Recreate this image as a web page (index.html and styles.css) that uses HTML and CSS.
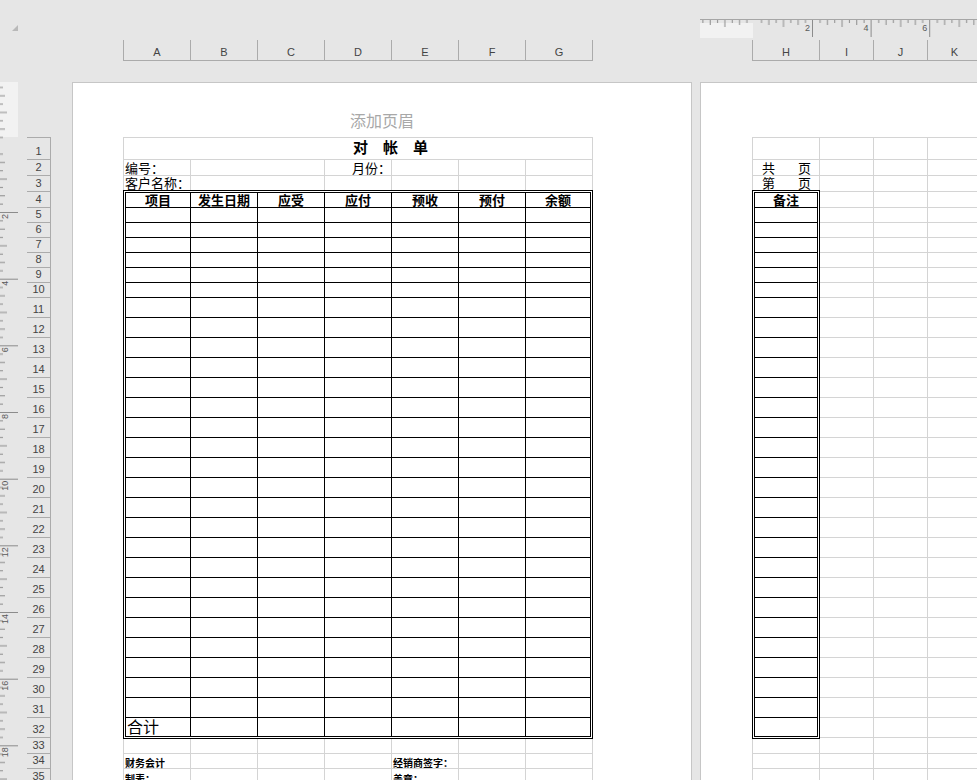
FILE: index.html
```html
<!DOCTYPE html>
<html lang="zh-CN">
<head>
<meta charset="utf-8">
<title>对帐单</title>
<link rel="stylesheet" href="styles.css">
</head>
<body>
<div class="app">
  <div class="top">
    <div class="top-left"><span class="corner"></span></div>
    <div class="top-p1">
      <div class="colheads p1"><span>A</span><span>B</span><span>C</span><span>D</span><span>E</span><span>F</span><span>G</span></div>
    </div>
    <div class="top-p2">
      <svg class="hruler" width="277" height="19" viewBox="0 0 277 19">
        <defs>
          <pattern id="hq" x="53.7" y="0" width="58.6" height="19" patternUnits="userSpaceOnUse">
            <rect x="7.33" y="1" width="1" height="3" fill="#8c8c8c"/>
            <rect x="14.65" y="1" width="1" height="5" fill="#8c8c8c"/>
            <rect x="21.98" y="1" width="1" height="3" fill="#8c8c8c"/>
            <rect x="29.3" y="1" width="1" height="7" fill="#8c8c8c"/>
            <rect x="36.63" y="1" width="1" height="3" fill="#8c8c8c"/>
            <rect x="43.95" y="1" width="1" height="5" fill="#8c8c8c"/>
            <rect x="51.28" y="1" width="1" height="3" fill="#8c8c8c"/>
          </pattern>
        </defs>
        <rect x="0" y="4" width="53" height="15" fill="#f2f2f2"/>
        <rect x="0" y="0" width="277" height="1" fill="#a6a6a6"/>
        <rect x="0" y="0" width="277" height="19" fill="url(#hq)"/>
        <rect x="112" y="1" width="1" height="17" fill="#8c8c8c"/>
        <rect x="170.6" y="1" width="1" height="17" fill="#8c8c8c"/>
        <rect x="229.2" y="1" width="1" height="17" fill="#8c8c8c"/>
        <text x="110" y="12" class="rl" text-anchor="end">2</text>
        <text x="168.6" y="12" class="rl" text-anchor="end">4</text>
        <text x="227.2" y="12" class="rl" text-anchor="end">6</text>
      </svg>
      <div class="colheads p2"><span class="wh">H</span><span>I</span><span>J</span><span>K</span></div>
    </div>
  </div>

  <div class="main">
    <svg class="vruler" width="18" height="698" viewBox="0 0 18 698">
      <defs>
        <pattern id="vq" x="0" y="63.3" width="18" height="66.67" patternUnits="userSpaceOnUse">
          <rect x="0" y="8.33" width="3" height="1" fill="#8c8c8c"/>
          <rect x="0" y="16.67" width="5" height="1" fill="#8c8c8c"/>
          <rect x="0" y="25" width="3" height="1" fill="#8c8c8c"/>
          <rect x="0" y="33.33" width="7" height="1" fill="#8c8c8c"/>
          <rect x="0" y="41.67" width="3" height="1" fill="#8c8c8c"/>
          <rect x="0" y="50" width="5" height="1" fill="#8c8c8c"/>
          <rect x="0" y="58.33" width="3" height="1" fill="#8c8c8c"/>
        </pattern>
      </defs>
      <rect x="0" y="0" width="18" height="55" fill="#f2f2f2"/>
      <rect x="0" y="0" width="18" height="698" fill="url(#vq)"/>
      <rect x="0" y="130" width="18" height="1" fill="#8c8c8c"/>
      <rect x="0" y="196.7" width="18" height="1" fill="#8c8c8c"/>
      <rect x="0" y="263.3" width="18" height="1" fill="#8c8c8c"/>
      <rect x="0" y="330" width="18" height="1" fill="#8c8c8c"/>
      <rect x="0" y="396.7" width="18" height="1" fill="#8c8c8c"/>
      <rect x="0" y="463.3" width="18" height="1" fill="#8c8c8c"/>
      <rect x="0" y="530" width="18" height="1" fill="#8c8c8c"/>
      <rect x="0" y="596.7" width="18" height="1" fill="#8c8c8c"/>
      <rect x="0" y="663.3" width="18" height="1" fill="#8c8c8c"/>
      <text class="rl" text-anchor="end" transform="translate(8 132) rotate(-90)">2</text>
      <text class="rl" text-anchor="end" transform="translate(8 198.7) rotate(-90)">4</text>
      <text class="rl" text-anchor="end" transform="translate(8 265.3) rotate(-90)">6</text>
      <text class="rl" text-anchor="end" transform="translate(8 332) rotate(-90)">8</text>
      <text class="rl" text-anchor="end" transform="translate(8 398.7) rotate(-90)">10</text>
      <text class="rl" text-anchor="end" transform="translate(8 465.3) rotate(-90)">12</text>
      <text class="rl" text-anchor="end" transform="translate(8 532) rotate(-90)">14</text>
      <text class="rl" text-anchor="end" transform="translate(8 598.7) rotate(-90)">16</text>
      <text class="rl" text-anchor="end" transform="translate(8 665.3) rotate(-90)">18</text>
    </svg>

    <div class="rowheads">
      <div class="rh r23 first">1</div>
      <div class="rh r16">2</div>
      <div class="rh r16">3</div>
      <div class="rh r16">4</div>
      <div class="rh r15">5</div>
      <div class="rh r15">6</div>
      <div class="rh r15">7</div>
      <div class="rh r15">8</div>
      <div class="rh r15">9</div>
      <div class="rh r15">10</div>
      <div class="rh r20">11</div>
      <div class="rh r20">12</div>
      <div class="rh r20">13</div>
      <div class="rh r20">14</div>
      <div class="rh r20">15</div>
      <div class="rh r20">16</div>
      <div class="rh r20">17</div>
      <div class="rh r20">18</div>
      <div class="rh r20">19</div>
      <div class="rh r20">20</div>
      <div class="rh r20">21</div>
      <div class="rh r20">22</div>
      <div class="rh r20">23</div>
      <div class="rh r20">24</div>
      <div class="rh r20">25</div>
      <div class="rh r20">26</div>
      <div class="rh r20">27</div>
      <div class="rh r20">28</div>
      <div class="rh r20">29</div>
      <div class="rh r20">30</div>
      <div class="rh r20">31</div>
      <div class="rh r20">32</div>
      <div class="rh r16">33</div>
      <div class="rh r15">34</div>
      <div class="rh r16">35</div>
    </div>

    <div class="page page1">
      <div class="hdr">添加页眉</div>
      <div class="sheet">
        <div class="row1"><span class="title">对帐单</span></div>
        <div class="grow h16">
          <div class="c lbl">编号：</div><div class="c span2"></div><div class="c lbl rt">月份：</div><div class="c"></div><div class="c"></div><div class="c"></div>
        </div>
        <div class="grow h14 nb">
          <div class="c lbl">客户名称：</div><div class="c span2"></div><div class="c"></div><div class="c"></div><div class="c"></div><div class="c"></div>
        </div>
        <div class="tbl">
          <div class="th">项目</div><div class="th">发生日期</div><div class="th">应受</div><div class="th">应付</div><div class="th">预收</div><div class="th">预付</div><div class="th">余额</div>
          <div></div><div></div><div></div><div></div><div></div><div></div><div></div>
          <div></div><div></div><div></div><div></div><div></div><div></div><div></div>
          <div></div><div></div><div></div><div></div><div></div><div></div><div></div>
          <div></div><div></div><div></div><div></div><div></div><div></div><div></div>
          <div></div><div></div><div></div><div></div><div></div><div></div><div></div>
          <div></div><div></div><div></div><div></div><div></div><div></div><div></div>
          <div></div><div></div><div></div><div></div><div></div><div></div><div></div>
          <div></div><div></div><div></div><div></div><div></div><div></div><div></div>
          <div></div><div></div><div></div><div></div><div></div><div></div><div></div>
          <div></div><div></div><div></div><div></div><div></div><div></div><div></div>
          <div></div><div></div><div></div><div></div><div></div><div></div><div></div>
          <div></div><div></div><div></div><div></div><div></div><div></div><div></div>
          <div></div><div></div><div></div><div></div><div></div><div></div><div></div>
          <div></div><div></div><div></div><div></div><div></div><div></div><div></div>
          <div></div><div></div><div></div><div></div><div></div><div></div><div></div>
          <div></div><div></div><div></div><div></div><div></div><div></div><div></div>
          <div></div><div></div><div></div><div></div><div></div><div></div><div></div>
          <div></div><div></div><div></div><div></div><div></div><div></div><div></div>
          <div></div><div></div><div></div><div></div><div></div><div></div><div></div>
          <div></div><div></div><div></div><div></div><div></div><div></div><div></div>
          <div></div><div></div><div></div><div></div><div></div><div></div><div></div>
          <div></div><div></div><div></div><div></div><div></div><div></div><div></div>
          <div></div><div></div><div></div><div></div><div></div><div></div><div></div>
          <div></div><div></div><div></div><div></div><div></div><div></div><div></div>
          <div></div><div></div><div></div><div></div><div></div><div></div><div></div>
          <div></div><div></div><div></div><div></div><div></div><div></div><div></div>
          <div></div><div></div><div></div><div></div><div></div><div></div><div></div>
          <div class="sum">合计</div><div></div><div></div><div></div><div></div><div></div><div></div>
        </div>
        <div class="grow h15">
          <div class="c"></div><div class="c"></div><div class="c"></div><div class="c"></div><div class="c"></div><div class="c"></div><div class="c"></div>
        </div>
        <div class="grow h15">
          <div class="c ft">财务会计</div><div class="c"></div><div class="c"></div><div class="c"></div><div class="c ft">经销商签字：</div><div class="c"></div><div class="c"></div>
        </div>
        <div class="grow h16">
          <div class="c ft ft2">制表：</div><div class="c"></div><div class="c"></div><div class="c"></div><div class="c ft ft2">盖章：</div><div class="c"></div><div class="c"></div>
        </div>
      </div>
    </div>

    <div class="page page2">
      <div class="hdr"></div>
      <div class="sheet2">
        <div class="hcol">
          <div class="hc h23 first"></div>
          <div class="hc h16 pg"><span>共</span><span>页</span></div>
          <div class="hc h14 pg nb"><span>第</span><span>页</span></div>
          <div class="tbl1">
            <div class="th">备注</div>
            <div></div><div></div><div></div><div></div><div></div><div></div>
            <div></div><div></div><div></div><div></div><div></div><div></div><div></div>
            <div></div><div></div><div></div><div></div><div></div><div></div><div></div>
            <div></div><div></div><div></div><div></div><div></div><div></div><div></div><div></div>
          </div>
          <div class="hc h15"></div>
          <div class="hc h15"></div>
          <div class="hc h16"></div>
        </div>
        <div class="ijk">
          <div></div><div></div><div></div>
          <div></div><div></div><div></div>
          <div></div><div></div><div></div>
          <div></div><div></div><div></div>
          <div></div><div></div><div></div>
          <div></div><div></div><div></div>
          <div></div><div></div><div></div>
          <div></div><div></div><div></div>
          <div></div><div></div><div></div>
          <div></div><div></div><div></div>
          <div></div><div></div><div></div>
          <div></div><div></div><div></div>
          <div></div><div></div><div></div>
          <div></div><div></div><div></div>
          <div></div><div></div><div></div>
          <div></div><div></div><div></div>
          <div></div><div></div><div></div>
          <div></div><div></div><div></div>
          <div></div><div></div><div></div>
          <div></div><div></div><div></div>
          <div></div><div></div><div></div>
          <div></div><div></div><div></div>
          <div></div><div></div><div></div>
          <div></div><div></div><div></div>
          <div></div><div></div><div></div>
          <div></div><div></div><div></div>
          <div></div><div></div><div></div>
          <div></div><div></div><div></div>
          <div></div><div></div><div></div>
          <div></div><div></div><div></div>
          <div></div><div></div><div></div>
          <div></div><div></div><div></div>
          <div></div><div></div><div></div>
          <div></div><div></div><div></div>
          <div></div><div></div><div></div>
        </div>
      </div>
    </div>
  </div>
</div>
</body>
</html>
```
FILE: styles.css
```css
* { box-sizing: border-box; }
html, body { margin: 0; padding: 0; }
body {
  width: 977px;
  height: 780px;
  overflow: hidden;
  background: #e6e6e6;
  font-family: "Liberation Sans", Arial, sans-serif;
}
.app { width: 977px; height: 780px; display: flex; flex-direction: column; overflow: hidden; }

/* ---------- top strip ---------- */
.top { height: 82px; flex: none; display: flex; }
.top-left { width: 72px; flex: none; padding: 25px 0 0 12px; }
.corner {
  display: block; width: 0; height: 0;
  border-left: 6px solid transparent;
  border-bottom: 6px solid #b9b9b9;
}
.top-p1 { width: 628px; flex: none; padding: 40px 0 0 51px; }
.top-p2 { flex: 1; padding-top: 19px; overflow: hidden; }
.hruler { display: block; }
.rl { font-family: "Liberation Sans", Arial, sans-serif; font-size: 9px; fill: #5a5a5a; }

.colheads { display: flex; height: 21px; border-bottom: 1px solid #ababab; }
.colheads span {
  flex: none;
  width: 67px;
  border-left: 1px solid #ababab;
  text-align: center;
  font-size: 11px;
  line-height: 14px;
  padding-top: 5px;
  color: #444;
}
.colheads.p1 { width: 470px; }
.colheads.p1 span:last-child { width: 68px; border-right: 1px solid #ababab; }
.colheads.p2 { margin: 2px 0 0 52px; width: 240px; }
.colheads.p2 span { width: 54px; }
.colheads.p2 span.wh { width: 67px; }

/* ---------- main area ---------- */
.main { height: 698px; flex: none; display: flex; overflow: hidden; }
.vruler { display: block; flex: none; }

.rowheads { width: 24px; flex: none; margin: 0 21px 0 9px; padding-top: 55px; }
.rh {
  border-right: 1px solid #ababab;
  border-bottom: 1px solid #ababab;
  display: flex; align-items: flex-end; justify-content: center;
  font-size: 11px; line-height: 12px; padding-bottom: 2px;
  color: #444;
}
.rh.first { border-top: 1px solid #ababab; }
.r23 { height: 23px; }
.r16 { height: 16px; }
.r15 { height: 15px; }
.r20 { height: 20px; }

.page { background: #fff; border-top: 1px solid #c6c6c6; border-left: 1px solid #c6c6c6; overflow: hidden; }
.page1 { width: 620px; flex: none; border-right: 1px solid #c6c6c6; }
.page2 { flex: 1; margin-left: 8px; }
.hdr {
  height: 54px; padding-top: 27px;
  text-align: center;
  font-family: "Noto Sans CJK SC", sans-serif;
  font-size: 16px; line-height: 20px;
  color: #a8a8a8;
}

/* ---------- sheet page 1 ---------- */
.sheet { margin-left: 50px; width: 470px; font-family: "Noto Sans CJK SC", sans-serif; color: #000; }
.row1 {
  height: 23px;
  border: 1px solid #d4d4d4;
  padding-left: 229px;
}
.title { display: block; font-size: 15px; font-weight: 700; line-height: 17px; letter-spacing: 15px; }

.grow { display: grid; grid-template-columns: 68px repeat(6, 67px); }
.grow .c { border-right: 1px solid #d4d4d4; border-bottom: 1px solid #d4d4d4; white-space: nowrap; }
.grow .c:first-child { border-left: 1px solid #d4d4d4; }
.grow.nb .c { border-bottom: 0; }
.grow .span2 { grid-column: span 2; }
.h16 { height: 16px; }
.h15 { height: 15px; }
.h14 { height: 14px; }
.h23 { height: 23px; }
.lbl { font-size: 13px; line-height: 14px; padding-left: 1px; }
.h16 .lbl { padding-top: 1px; }
.rt { text-align: right; padding-left: 0; }
.ft { font-size: 10px; font-weight: 700; line-height: 11px; padding: 3px 0 0 1px; overflow: visible; }
.ft2 { padding-top: 4px; }

.tbl {
  display: grid;
  grid-template-columns: 65px repeat(5, 67px) 64px;
  grid-template-rows: repeat(7, 15px) repeat(21, 20px) 18px;
  width: 470px; height: 549px;
  border: 3px double #000;
  background: #fff;
}
.tbl > div { border-right: 1px solid #000; border-bottom: 1px solid #000; }
.tbl > div:nth-child(7n) { border-right: 0; }
.tbl > div:nth-last-child(-n+7) { border-bottom: 0; }
.th { font-size: 13px; font-weight: 700; line-height: 14px; text-align: center; }
.sum { font-size: 16px; line-height: 17px; padding-left: 1px; }

/* ---------- sheet page 2 ---------- */
.sheet2 { margin-left: 51px; display: flex; font-family: "Noto Sans CJK SC", sans-serif; color: #000; }
.hcol { width: 68px; flex: none; }
.hc { border-left: 1px solid #d4d4d4; border-right: 1px solid #d4d4d4; border-bottom: 1px solid #d4d4d4; }
.hc.first { border-top: 1px solid #d4d4d4; }
.hc.nb { border-bottom: 0; }
.pg { display: flex; gap: 23px; padding-left: 9px; font-size: 13px; line-height: 14px; }
.h16.pg { padding-top: 1px; }
.tbl1 {
  display: grid;
  grid-template-columns: 62px;
  grid-template-rows: repeat(7, 15px) repeat(21, 20px) 18px;
  width: 68px; height: 549px;
  border: 3px double #000;
}
.tbl1 > div { border-bottom: 1px solid #000; }
.tbl1 > div:last-child { border-bottom: 0; }

.ijk {
  flex: none;
  display: grid;
  grid-template-columns: repeat(3, 54px);
  grid-template-rows: 22px 16px 16px 16px repeat(6, 15px) repeat(22, 20px) 16px 15px 16px;
  border-top: 1px solid #d4d4d4;
}
.ijk > div { border-right: 1px solid #d4d4d4; border-bottom: 1px solid #d4d4d4; }
```
